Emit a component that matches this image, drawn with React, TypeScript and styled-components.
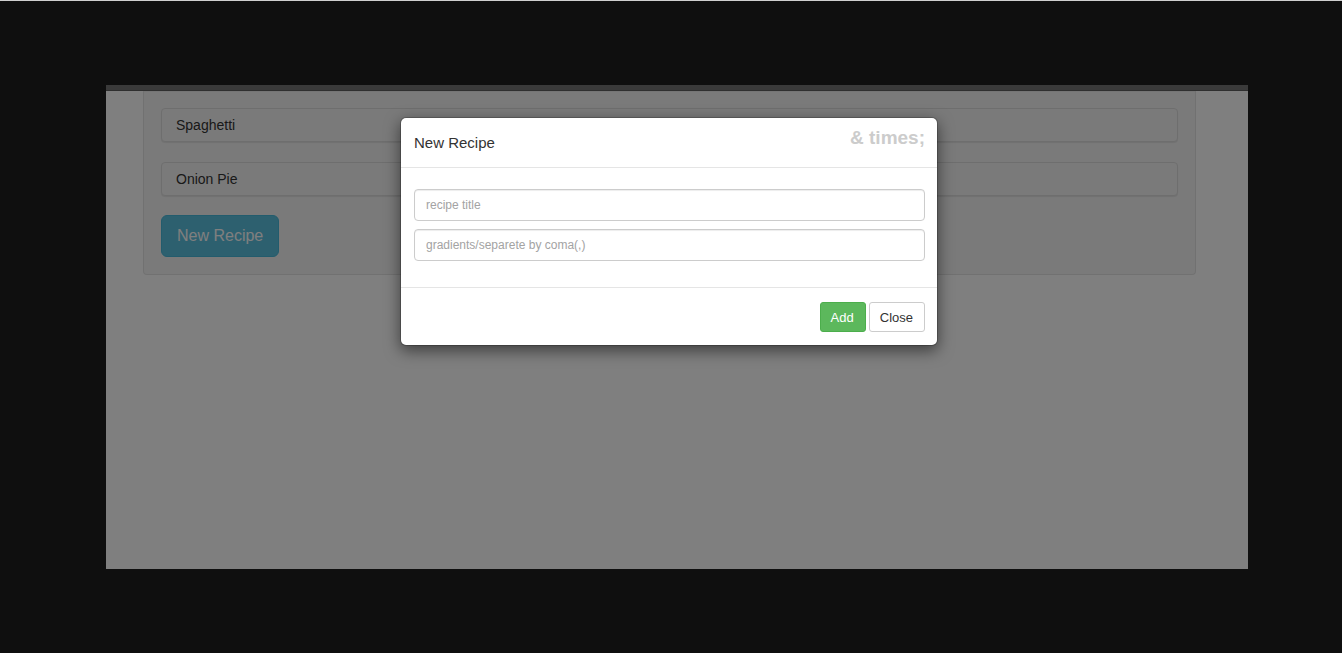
import React from "react";
import styled, { createGlobalStyle } from "styled-components";

const Global = createGlobalStyle`
  html, body { margin: 0; padding: 0; }
  body {
    background: #0f0f0f;
    border-top: 1px solid #cfcfcf;
    font-family: "Liberation Sans", Arial, sans-serif;
    height: 652px;
    overflow: hidden;
  }
`;

const Stage = styled.div`
  padding: 84px 0 0 106px;
`;

const Frame = styled.div`
  position: relative;
  width: 1142px;
  height: 484px;
  background: #ffffff;
  overflow: hidden;
`;

const TopBar = styled.div`
  height: 5px;
  background: #757575;
  border-bottom: 1px solid #5e5e5e;
`;

const Well = styled.div`
  margin-left: 37px;
  width: 1053px;
  box-sizing: border-box;
  background: #f5f5f5;
  border: 1px solid #e3e3e3;
  border-top: none;
  border-radius: 0 0 4px 4px;
  padding: 17px;
  display: flex;
  flex-direction: column;
  gap: 20px;
  box-shadow: inset 0 1px 1px rgba(0, 0, 0, 0.05);
`;

const RecipeItem = styled.div`
  height: 34px;
  box-sizing: border-box;
  display: flex;
  align-items: center;
  padding: 0 14px;
  background: #f5f5f5;
  border: 1px solid #dddddd;
  border-radius: 4px;
  box-shadow: 0 1px 1px rgba(0, 0, 0, 0.08);
  color: #333333;
  font-size: 14px;
`;

const BigButton = styled.button`
  align-self: flex-start;
  margin-top: -1px;
  height: 42px;
  padding: 0 15px;
  border-radius: 6px;
  border: 1px solid #46b8da;
  background: #5bc0de;
  color: #ffffff;
  font-family: inherit;
  font-size: 16px;
`;

const Backdrop = styled.div`
  position: absolute;
  inset: 0;
  background: rgba(0, 0, 0, 0.5);
`;

const Modal = styled.div`
  position: absolute;
  left: 294px;
  top: 32px;
  width: 538px;
  box-sizing: border-box;
  background: #ffffff;
  border: 1px solid rgba(0, 0, 0, 0.2);
  border-radius: 6px;
  box-shadow: 0 5px 15px rgba(0, 0, 0, 0.5);
  background-clip: padding-box;
`;

const Header = styled.div`
  height: 50px;
  box-sizing: border-box;
  border-bottom: 1px solid #e5e5e5;
  padding: 0 12px 0 13px;
  display: flex;
  align-items: center;
  justify-content: space-between;
`;

const Title = styled.h4`
  margin: 0;
  font-size: 15px;
  font-weight: normal;
  color: #333333;
`;

const CloseX = styled.span`
  align-self: flex-start;
  margin-top: 8px;
  font-size: 19px;
  font-weight: bold;
  color: #cccccc;
  line-height: 24px;
`;

const Body = styled.div`
  padding: 21px 12px 26px 13px;
  display: flex;
  flex-direction: column;
  gap: 8px;
`;

const Field = styled.input`
  height: 32px;
  box-sizing: border-box;
  width: 100%;
  border: 1px solid #cccccc;
  border-radius: 4px;
  padding: 0 11px;
  font-family: inherit;
  font-size: 12px;
  color: #555555;
  box-shadow: inset 0 1px 1px rgba(0, 0, 0, 0.075);
  outline: none;
  &::placeholder { color: #a3a3a3; }
`;

const Footer = styled.div`
  border-top: 1px solid #e5e5e5;
  padding: 14px 12px 13px;
  display: flex;
  justify-content: flex-end;
  gap: 3px;
`;

const SmallButton = styled.button<{ $variant: "success" | "default" }>`
  height: 30px;
  padding: 0 11px 0 10px;
  border-radius: 3px;
  font-family: inherit;
  font-size: 13px;
  border: 1px solid ${(p) => (p.$variant === "success" ? "#4cae4c" : "#cccccc")};
  background: ${(p) => (p.$variant === "success" ? "#5cb85c" : "#ffffff")};
  color: ${(p) => (p.$variant === "success" ? "#ffffff" : "#333333")};
`;

export default function App() {
  return (
    <>
      <Global />
      <Stage>
        <Frame>
          <TopBar />
          <Well>
            <RecipeItem>Spaghetti</RecipeItem>
            <RecipeItem>Onion Pie</RecipeItem>
            <BigButton>New Recipe</BigButton>
          </Well>
          <Backdrop />
          <Modal>
            <Header>
              <Title>New Recipe</Title>
              <CloseX>&amp; times;</CloseX>
            </Header>
            <Body>
              <Field placeholder="recipe title" />
              <Field placeholder="gradients/separete by coma(,)" />
            </Body>
            <Footer>
              <SmallButton $variant="success">Add</SmallButton>
              <SmallButton $variant="default">Close</SmallButton>
            </Footer>
          </Modal>
        </Frame>
      </Stage>
    </>
  );
}
